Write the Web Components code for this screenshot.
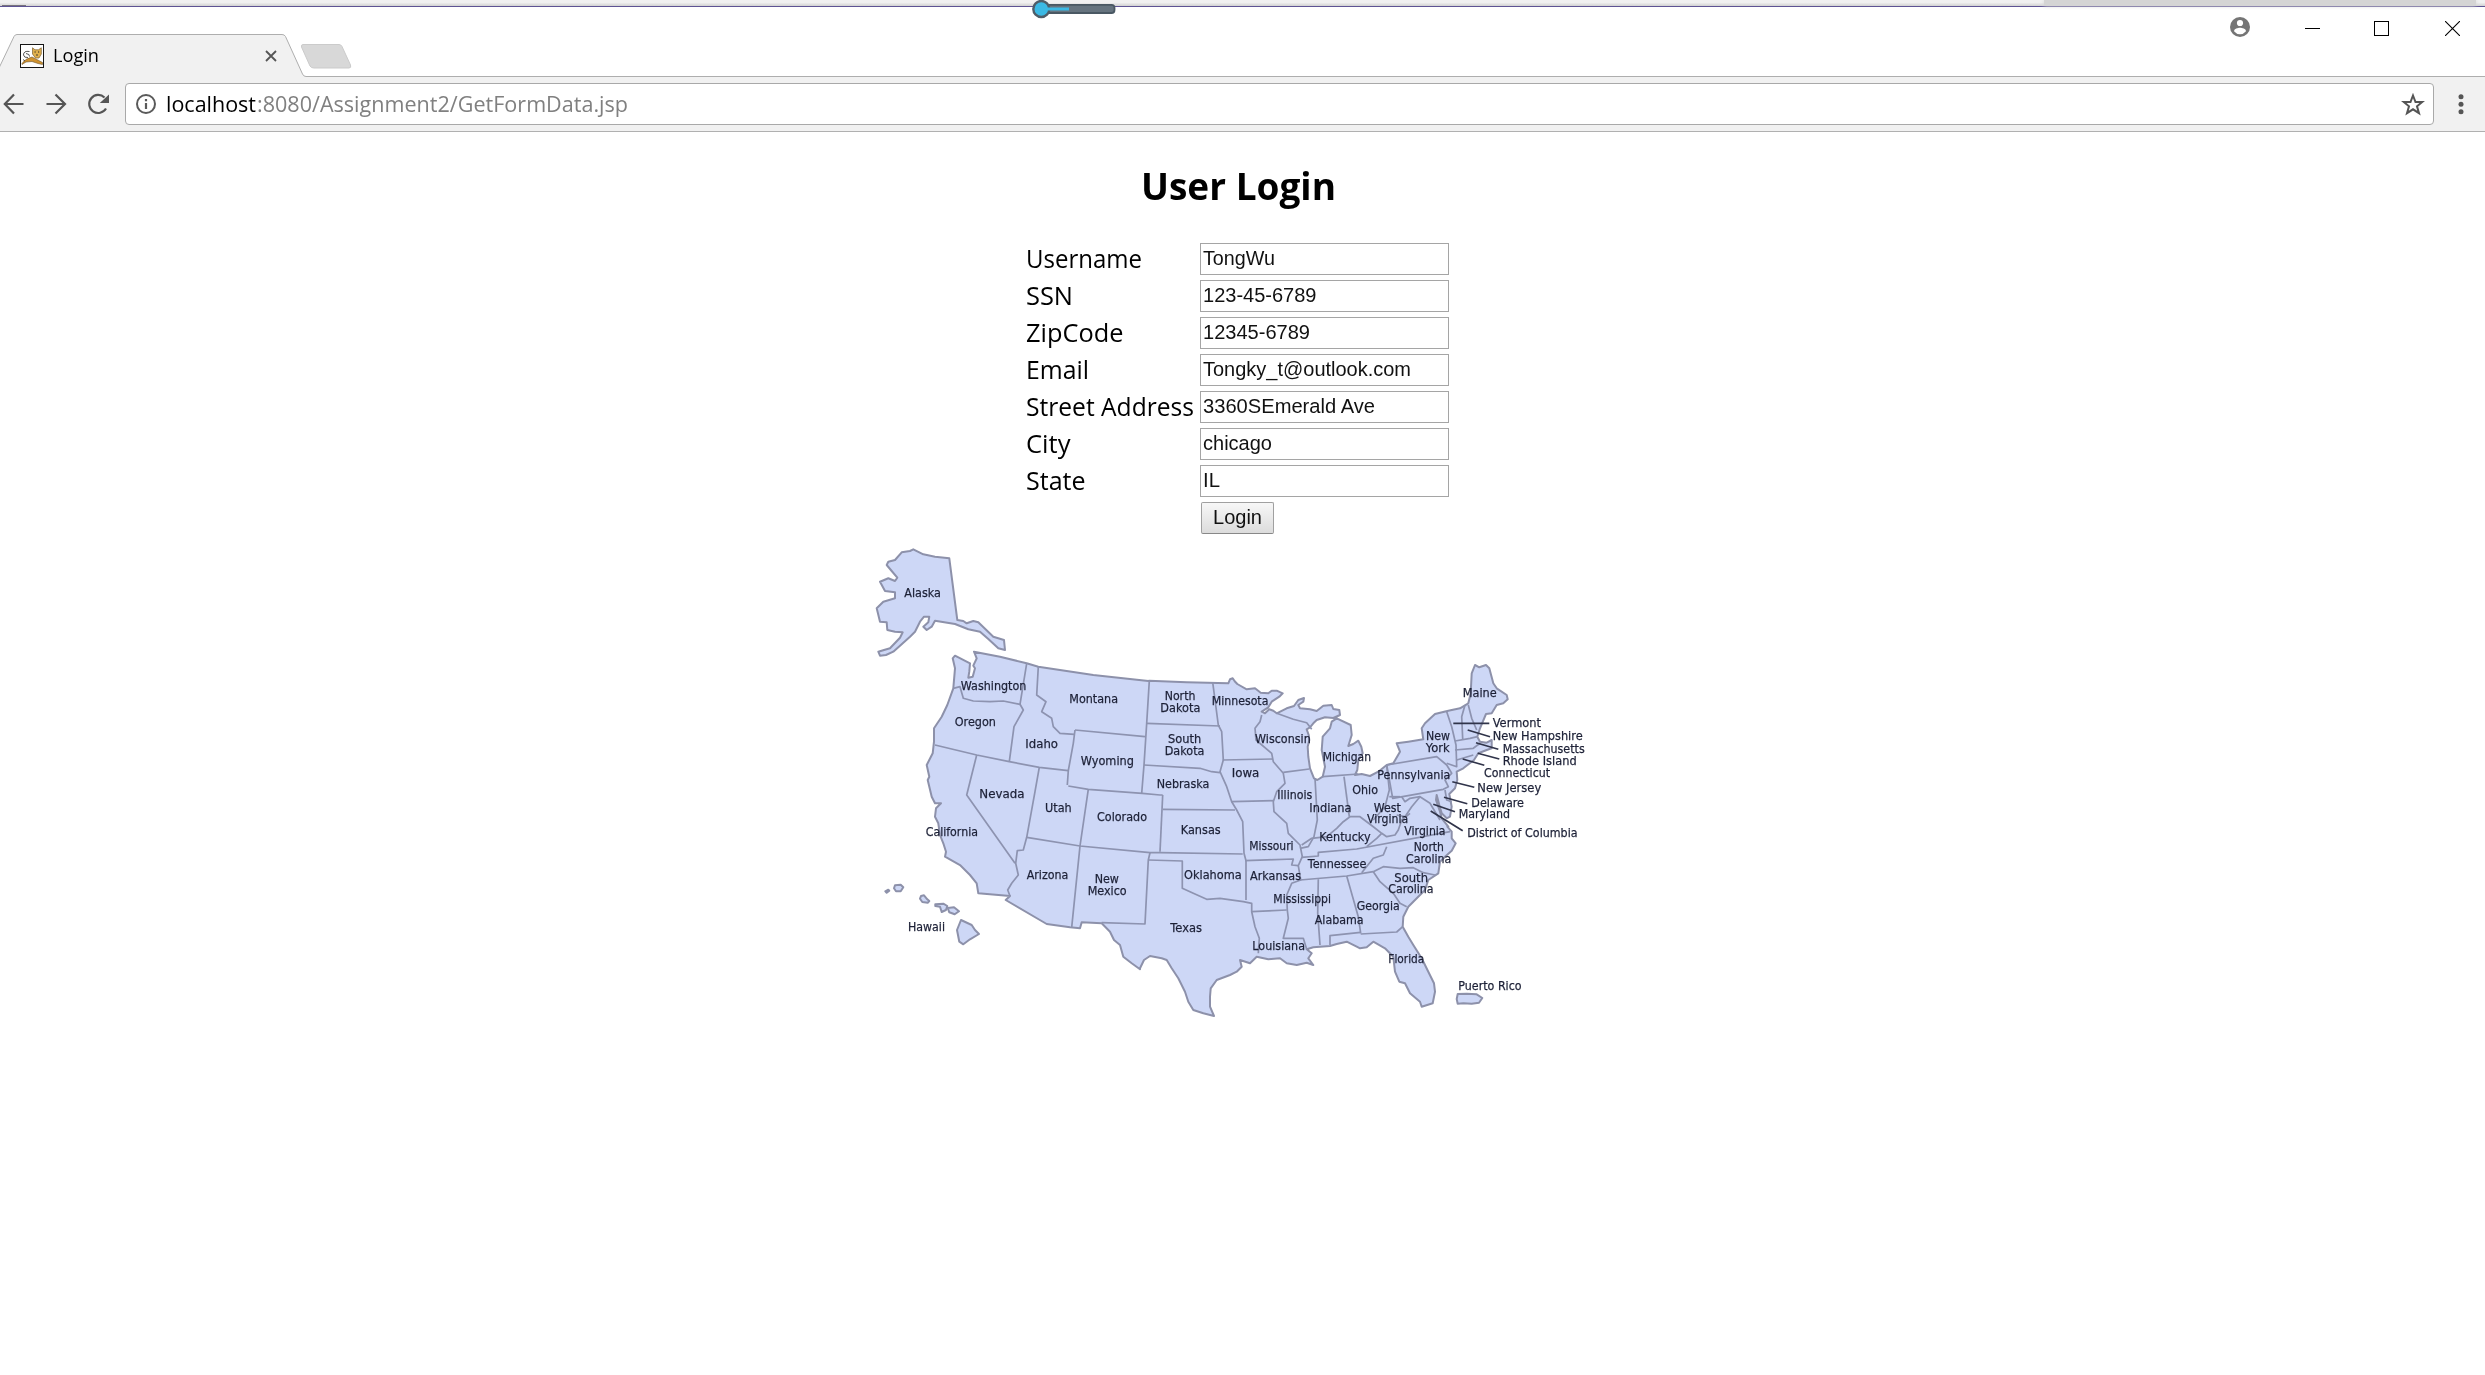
<!DOCTYPE html>
<html lang="en">
<head>
<meta charset="utf-8">
<title>Login</title>
<style>
html,body{margin:0;height:100%;background:#fff;overflow:hidden}
body{font-family:"Open Sans","Noto Sans",sans-serif;color:#000}
</style>
</head>
<body>
<browser-window></browser-window>
<script>
const define = (name, html, ready) => customElements.define(name, class extends HTMLElement {
  connectedCallback() {
    if (this.shadowRoot) return;
    this.attachShadow({mode: 'open'}).innerHTML = html;
    if (ready) ready.call(this, this.shadowRoot);
  }
});

// Text squeezed horizontally to a given width
define('fit-text', `<style>:host{display:block;white-space:nowrap;text-align:left}
span{display:inline-block;transform-origin:0 50%}</style><span><slot></slot></span>`, function (root) {
  const s = root.querySelector('span'), w = +this.getAttribute('w');
  this.style.width = w + 'px';
  s.style.transform = `scaleX(${w / s.getBoundingClientRect().width})`;
});

define('desktop-edge', `<style>
:host{display:block;height:7px;box-sizing:border-box;border-bottom:1px solid #5e5494;background:linear-gradient(#f1f1f1 40%,#d2d2d2);position:relative}
i{position:absolute;top:0;height:6px;left:2044px;width:432px;background:#d4d4d4;box-shadow:0 0 4px #d4d4d4}
b{position:absolute;left:2px;top:5px;width:24px;height:1px;background:#77727c}
svg{position:absolute;left:1030px;top:0;z-index:2}</style>
<i></i><b></b><svg width="90" height="20"><rect x="12" y="4.800" width="72.500" height="8.200" rx="3" fill="#66747f" stroke="#4a5863" stroke-width="1.800"/><circle cx="11.300" cy="9" r="8" fill="#3bb9e4" stroke="#4e5d68" stroke-width="2.400"/><path d="M14 9H39" stroke="#3bb9e4" stroke-width="3"/></svg>`);

define('page-tab', `<style>
:host{display:flex;width:306px;height:43px;margin-top:27px;position:relative;box-sizing:border-box;padding:9px 0 0 20px}
.shape{position:absolute;left:0;top:0;z-index:0}
.fav{position:relative;margin-top:1px;flex:none}
fit-text{position:relative;margin-left:9px;font-size:19px;line-height:24px}
.x{position:relative;margin:7px 0 0 166px}</style>
<svg class="shape" width="306" height="43"><path d="M-1 34L14 2.500Q15 .5 17 .5H282Q284.500 .5 285.500 2.500L302.500 40Q303.500 42.500 306 42.500V43H-1Z" fill="#f1f1f1"/><path d="M-1 34L14 2.500Q15 .5 17 .5H282Q284.500 .5 285.500 2.500L302.500 40Q303.500 42.500 306 42.500" fill="none" stroke="#aeaeae"/></svg>
<svg class="fav" width="24" height="24"><rect x=".5" y=".5" width="23" height="23" fill="#fff" stroke="#151515"/><path d="M2 19.500Q5 14.500 12 13L15 14.500 22.500 18.500V20.500L18 19.500 12 17.500 6 18 2 20.500Z" fill="#cf922f" stroke="#6d542d" stroke-width=".6"/><path d="M12.500 3.800L15 5.800H18.500L21.300 3.800V10L19 14H15.500L12.500 10Z" fill="#e0b04c" stroke="#7c6030" stroke-width=".7"/><path d="M9.500 7.500Q3.500 6.500 3.500 11Q4 14 8 13.500M6 9.500Q10 10 9.500 12.500M3 15.500L5 17" fill="none" stroke="#444" stroke-width=".9"/><path d="M14.500 8h1.200M18 8h1.200M16.200 11h1.600" stroke="#222"/></svg>
<fit-text w="46">Login</fit-text>
<svg class="x" width="12" height="12"><path d="M1 1L11 11M11 1L1 11" stroke="#555" stroke-width="1.800"/></svg>`);

define('title-bar', `<style>
:host{display:flex;height:70px;align-items:flex-start;background:#fff linear-gradient(#aeaeae,#aeaeae) 306px 69px/100% 1px no-repeat}
.new{margin:36px 0 0 -6px}
.win{margin-left:auto;display:flex;padding-right:25px}
.user{margin:10px 55px 0 0}.min{margin:14px 54px 0 0}.max{margin:14px 56px 0 0}.cl{margin-top:14px}</style>
<page-tab></page-tab>
<svg class="new" width="54" height="28"><path d="M3 1.500H39Q41 1.500 42 3.500L50.500 22Q51.500 25 49 25H14Q11 25 10 23L1.500 4Q1 1.500 3 1.500Z" fill="#d8d8d8" stroke="#cbcbcb"/></svg>
<div class="win">
<svg class="user" width="20" height="20"><circle cx="10" cy="10" r="10" fill="#757575"/><circle cx="10" cy="6" r="3.100" fill="#fff"/><path d="M4 14.300C4 11.500 8 10.700 10 10.700S16 11.500 16 14.300Q13.500 17.300 10 17.300T4 14.300Z" fill="#fff"/></svg>
<svg class="min" width="15" height="15"><path d="M0 7.500H15" stroke="#000"/></svg>
<svg class="max" width="15" height="15"><rect x=".5" y=".5" width="14" height="14" fill="none" stroke="#000"/></svg>
<svg class="cl" width="15" height="15"><path d="M0 0L15 15M15 0L0 15" stroke="#000" stroke-width="1.100"/></svg>
</div>`);

define('tool-bar', `<style>
:host{display:flex;height:55px;box-sizing:border-box;background:#f1f1f1;border-bottom:1px solid #b0b0b0;padding-top:6px}
.nav{width:125px;height:42px;flex:none}
.box{width:2309px;height:42px;box-sizing:border-box;border:1px solid #a9a9a9;border-radius:4px;background:#fff;display:flex}
.info{margin:10px 0 0 10px}
fit-text{font-size:22.500px;line-height:39px}
.host{margin-left:9.500px}.path{color:#808080;margin-left:1px}
.star{margin:9px 8px 0 auto}
.dots{margin:11px 0 0 22px}</style>
<svg class="nav" viewBox="0 0 125 42" fill="none" stroke="#555" stroke-width="2.200"><path d="M23.500 21H5M14 11.500L4.800 21L14 30.500M46.500 21H65M55.500 11.500L65 21L55.500 30.500"/><path d="M106 25.500A9 9 0 1 1 104.500 14.500"/><path d="M109 11.500V20H99.800Z" fill="#555" stroke="none"/></svg>
<div class="box">
<svg class="info" width="20" height="20"><circle cx="10" cy="10" r="9" fill="none" stroke="#5a5a5a" stroke-width="2"/><path d="M10 9V15M10 5V7.300" stroke="#5a5a5a" stroke-width="2.200"/></svg>
<fit-text class="host" w="90">localhost</fit-text><fit-text class="path" w="371">:8080/Assignment2/GetFormData.jsp</fit-text>
<svg class="star" width="24" height="24"><path d="M12 2.500L14.500 9H21.200L16 13.300L18 20.200L12 16.300L6 20.200L8 13.300L2.800 9H9.500Z" fill="none" stroke="#555" stroke-width="2"/></svg>
</div>
<svg class="dots" width="10" height="22" fill="#555"><circle cx="5" cy="2.700" r="2.500"/><circle cx="5" cy="10.200" r="2.500"/><circle cx="5" cy="17.700" r="2.500"/></svg>`);

define('form-row', `<style>
:host{display:flex;height:37px}
.l{width:173px;flex:none}
.l fit-text{font-size:25px;line-height:35px;margin-left:-.7px}
.v{margin-top:2px;width:249px;height:32px;box-sizing:border-box;border:1px solid #a5a5a5;background:#fff;padding-left:1.700px;font-family:"Liberation Sans",Arial,sans-serif;color:#111}
.v fit-text{font-size:20.500px;line-height:28px}</style>
<div class="l"></div><div class="v"></div>`, function (root) {
  const a = n => this.getAttribute(n);
  root.querySelector('.l').innerHTML = `<fit-text w="${a('lw')}">${a('label')}</fit-text>`;
  root.querySelector('.v').innerHTML = `<fit-text w="${a('vw')}">${a('value')}</fit-text>`;
});

define('push-button', `<style>
:host{display:block;width:73px;height:32px;box-sizing:border-box;border:1px solid #a0a0a0;border-bottom-color:#888;border-radius:2px;background:linear-gradient(#f7f7f7,#dcdcdc);padding-left:10.500px;font:20.500px/28px "Liberation Sans",Arial,sans-serif;color:#111}</style><fit-text w="49"><slot></slot></fit-text>`);

define('login-form', `<style>
:host{display:flex;flex-direction:column;width:422px;margin:27px 0 0 1027px}
h1{margin:0 0 30px 113.500px;font-size:38px;line-height:52px;font-weight:bold}
push-button{margin:2px 0 0 174px}</style>
<h1><fit-text w="195">User Login</fit-text></h1>
<form-row label="Username" lw="116" value="TongWu" vw="72"></form-row>
<form-row label="SSN" lw="47" value="123-45-6789" vw="113.500"></form-row>
<form-row label="ZipCode" lw="97.500" value="12345-6789" vw="107"></form-row>
<form-row label="Email" lw="63" value="Tongky_t@outlook.com" vw="208"></form-row>
<form-row label="Street Address" lw="168" value="3360SEmerald Ave" vw="172"></form-row>
<form-row label="City" lw="44.500" value="chicago" vw="69"></form-row>
<form-row label="State" lw="59.500" value="IL" vw="17"></form-row>
<push-button>Login</push-button>`);

// Map sheets: origin of each sheet on the page, three sheet units per pixel
const SHEET = {A:[860,535], B:[1140,640], C:[1380,640], D:[860,780], E:[1140,820], F:[1360,820]};
const points = str => {
  let s, out = [], tok = str.trim().split(/\s+/);
  for (let i = 0; i < tok.length;) {
    if (SHEET[tok[i]]) { s = SHEET[tok[i++]]; continue; }
    out.push([(s[0] + tok[i] / 3).toFixed(1), (s[1] + tok[i + 1] / 3).toFixed(1)]); i += 2;
  }
  return 'M' + out.map(p => p.join(' ')).join('L');
};
const LAND = [
`A 342 350 420 365 500 385 535 395 700 420 865 438 B 28 122 140 127 265 130 270 118 278 115 284 124 292 132 320 148 345 145 362 158 385 160 395 152 410 152 428 160 418 170 395 185 385 202 365 215 375 220 388 208 400 212 410 220 440 205 462 198 475 180 492 174 490 185 475 195 480 205 510 208 530 213 550 197 575 195 580 207 598 210 600 225 580 234 555 232 530 240 520 250 510 262 500 268 506 285 508 300 503 320 505 350 510 385 522 415 532 420 548 410 555 380 545 330 548 290 570 265 575 245 590 235 632 255 635 285 625 318 640 312 655 302 664 320 668 340 655 360 652 390 645 405 665 402 690 408 715 395 740 375 C 40 370 60 335 50 310 85 305 130 298 125 265 135 250 165 222 205 212 240 205 265 190 272 160 275 100 285 75 298 82 318 75 328 85 340 130 350 145 380 165 383 178 370 190 350 195 335 220 318 222 300 265 292 290 300 305 320 308 335 300 335 325 320 330 295 340 282 360 250 385 230 395 232 420 225 445 208 462 215 500 210 530 200 535 185 520 178 495 170 465 168 480 180 515 185 535 205 560 F 262 20 275 35 275 55 287 70 275 92 255 110 240 125 235 160 205 180 195 210 180 225 165 240 145 260 130 290 128 320 145 350 160 375 185 415 205 455 222 490 225 515 218 550 185 560 180 545 150 520 135 490 118 485 105 455 100 410 75 385 40 365 20 382 0 385 E 650 380 620 365 590 372 570 378 540 380 520 382 500 388 515 400 505 415 520 435 500 428 470 435 440 430 420 415 385 418 350 410 330 430 300 420 305 440 290 455 270 465 230 480 212 505 210 530 210 560 222 588 190 580 160 570 145 545 135 515 115 475 95 445 80 420 65 415 30 408 12 420 0 445 D 840 568 815 550 790 530 780 495 762 480 750 455 725 430 665 427 660 445 630 442 560 432 437 360 450 348 355 340 350 310 330 285 300 255 255 230 258 215 250 190 240 165 235 130 225 110 228 85 243 70 225 70 215 50 203 0 A 208 725 200 690 218 655 222 620 222 580 245 545 262 510 280 460 285 400 278 370 285 362 330 385 328 410 325 428 338 425 345 400 340 392 350 370`,
`A 268 70 292 255 310 258 320 265 340 258 355 262 400 305 432 315 435 345 415 340 385 312 360 290 325 283 285 267 225 257 215 275 200 285 190 275 205 262 208 245 192 245 180 260 165 290 150 305 100 350 78 360 60 362 55 350 72 345 90 340 120 308 128 292 105 290 82 285 80 262 60 260 50 220 70 200 105 190 105 172 75 168 60 140 85 130 105 138 112 128 95 108 80 90 85 80 105 75 125 52 150 48 160 43 190 58 225 65`,
'D 303 420 335 435 345 450 357 462 330 478 310 493 298 485 291 450',
'D 105 316 122 314 130 322 122 334 108 334 102 325','D 76 334 85 329 88 332 80 338',
'D 183 348 192 346 202 358 208 363 203 368 187 366 180 356','D 226 373 250 371 262 378 258 390 245 396 240 380 226 378','D 263 384 282 382 297 394 284 403 268 397',
'F 293 522 320 521 350 523 367 534 357 548 335 551 310 550 293 551 290 537'];
const BORDERS = `A 280 460 300 455 310 490 340 498 390 500 430 498 480 508|A 500 385 480 508 490 525 462 575 448 680|A 225 630 350 660 448 680 538 697 625 707|A 350 660 330 740 D 320 45 465 250|A 538 697 525 770 D 500 172 490 210 472 212 467 250 475 285 455 310 443 330 450 348|D 500 172 660 198 870 218 E 60 98 308 102|D 625 18 685 28 847 40 900 45 E 68 -75|D 685 28 660 198 635 442|A 645 585 640 625 625 707 622 750|A 645 585 855 605|A 535 395 530 480 558 500 545 530 575 550 580 575 600 595 643 598|A 868 438 860 565 852 690 845 775|B 20 250 240 258|B 12 375 180 385 215 395 240 398|B 218 127 235 255 245 275 250 360 240 395 260 440 275 485 290 510 308 545 312 640 E 318 122 318 240|B 248 360 398 357|B 365 225 360 245 345 265 348 300 395 340 400 365 430 400 435 430 410 455 400 485 402 515 440 550 445 580 E 480 75 487 110 475 137 482 180 455 190 440 225 442 270 445 295 430 355 490 355 500 388|B 275 485 400 482|B 68 508 285 510|B 68 465 60 635|D 870 218 865 240 855 432 725 428|E 25 120 127 123 127 205 160 220 200 238 240 235 310 245 335 250 335 275 345 320 358 355 355 400|E 315 122 460 117 455 135 475 137|E 335 275 440 270|E 535 178 533 280 540 375|E 480 180 620 168 700 155|E 485 112 535 108 535 97 650 87 F 270 35|E 740 80 730 105 700 115 665 158|E 620 168 655 290 662 340|E 570 375 570 347 662 337|E 662 342 770 336 F 128 320|F 40 155 60 185 100 220 120 250 140 260|F 40 155 70 140 120 145 160 143 190 158 225 165|B 430 397 508 387|B 548 410 655 402|B 612 410 628 530|B 525 415 532 540 522 590 E 505 80 480 85|E 485 75 515 55 560 50 590 25 610 5 630 -10 660 -10 700 20 725 40|B 740 375 748 450 735 500 700 540|B 748 470 780 470|E 725 40 740 50 765 45 F 115 30 125 0 150 -20|E 725 40 710 55 680 80|C 20 375 170 350 200 375 215 400 195 420 205 440 190 448 38 475 20 375|C 200 215 215 260 228 315 230 380 200 370|C 255 195 245 230 248 297|C 225 303 270 295 292 290|C 265 195 275 235 290 270|C 225 330 280 325 300 310|C 230 360 280 345|C 65 470 75 485 90 475 120 470 150 490 180 540|C 120 470 95 500 75 530 50 525|C 195 450 200 480 215 485|B 410 220 460 238 500 248 515 268`;
const LEADERS = 'C 220 250 328 250|C 263 270 330 290|C 288 308 355 328|C 293 340 358 357|C 248 357 313 376|C 217 425 283 442|C 192 472 262 491|C 160 493 225 515|C 152 513 248 572';
// sheet, left, baseline, width, name
const NAMES = `A 133 184 110 Alaska|A 302 464 197 Washington|A 284 571 124 Oregon|A 628 503 146 Montana|A 496 639 98 Idaho|A 662 688 160 Wyoming|B 74 180 92 North|B 61 216 120 Dakota|B 84 308 100 South|B 74 345 119 Dakota|B 215 193 170 Minnesota|B 345 309 167 Wisconsin|B 548 361 145 Michigan|B 275 411 83 Iowa|B 50 443 158 Nebraska|B 412 477 105 Illinois|B 508 514 127 Indiana|B 637 461 77 Ohio|B 122 580 120 Kansas|E 538 62 154 Kentucky|C 248 169 102 Maine|C 338 260 145 Vermont|C 338 300 270 New Hampshire|C 368 339 246 Massachusetts|C 368 375 222 Rhode Island|C 312 411 198 Connecticut|C 292 456 192 New Jersey|C 274 501 158 Delaware|C 236 532 154 Maryland|C 262 589 331 District of Columbia|C 138 300 72 New|C 137 335 72 York|C -8 415 219 Pennsylvania|C -19 514 81 West|C -39 549 124 Virginia|C 73 585 124 Virginia|D 358 54 136 Nevada|D 555 95 80 Utah|D 711 121 150 Colorado|D 197 166 157 California|D 500 295 125 Arizona|D 704 308 73 New|D 683 345 117 Mexico|D 144 451 111 Hawaii|E 132 176 173 Oklahoma|E 328 89 133 Missouri|E 330 179 153 Arkansas|E 503 143 176 Tennessee|E 400 247 173 Mississippi|E 524 311 147 Alabama|E 91 335 95 Texas|E 337 389 158 Louisiana|F -10 269 129 Georgia|F 161 93 91 North|F 138 129 136 Carolina|F 103 184 101 South|F 85 219 136 Carolina|F 85 429 108 Florida|F 295 508 190 Puerto Rico`;

define('state-map', `<style>
:host{display:block;width:750px;height:490px;margin:6px 0 0 860px}
svg{display:block;filter:blur(.5px)}
text{font:12.800px "DejaVu Sans",Verdana,sans-serif;fill:#1c2036;stroke:#1c2036;stroke-width:.25px}</style><div></div>`, function (root) {
  const lines = s => s.split('|').map(p => `<path d="${points(p)}"/>`).join('');
  const names = NAMES.split('|').map(n => {
    const [s, x, y, w, ...t] = n.split(' ');
    return `<text x="${(SHEET[s][0] + x / 3).toFixed(1)}" y="${(SHEET[s][1] + y / 3 + .4).toFixed(1)}" textLength="${(w / 3).toFixed(1)}" lengthAdjust="spacingAndGlyphs">${t.join(' ')}</text>`;
  }).join('');
  root.querySelector('div').innerHTML = `<svg width="750" height="490" viewBox="860 540 750 490" stroke-linejoin="round">
<g fill="#cdd7f6" stroke="#8d91aa" stroke-width="2">${LAND.map(p => `<path d="${points(p)}Z"/>`).join('')}</g>
<g fill="none" stroke="#8d93b0" stroke-width="1.700">${lines(BORDERS)}</g>
<g fill="none" stroke="#30344a" stroke-width="1.700">${lines(LEADERS)}</g>${names}</svg>`;
});

define('browser-window', `<style>:host{display:flex;flex-direction:column;width:2485px;height:1375px;background:#fff;overflow:hidden}
desktop-edge,title-bar,tool-bar{flex:none}</style>
<desktop-edge></desktop-edge><title-bar></title-bar><tool-bar></tool-bar><login-form></login-form><state-map></state-map>`);
</script>
</body>
</html>
